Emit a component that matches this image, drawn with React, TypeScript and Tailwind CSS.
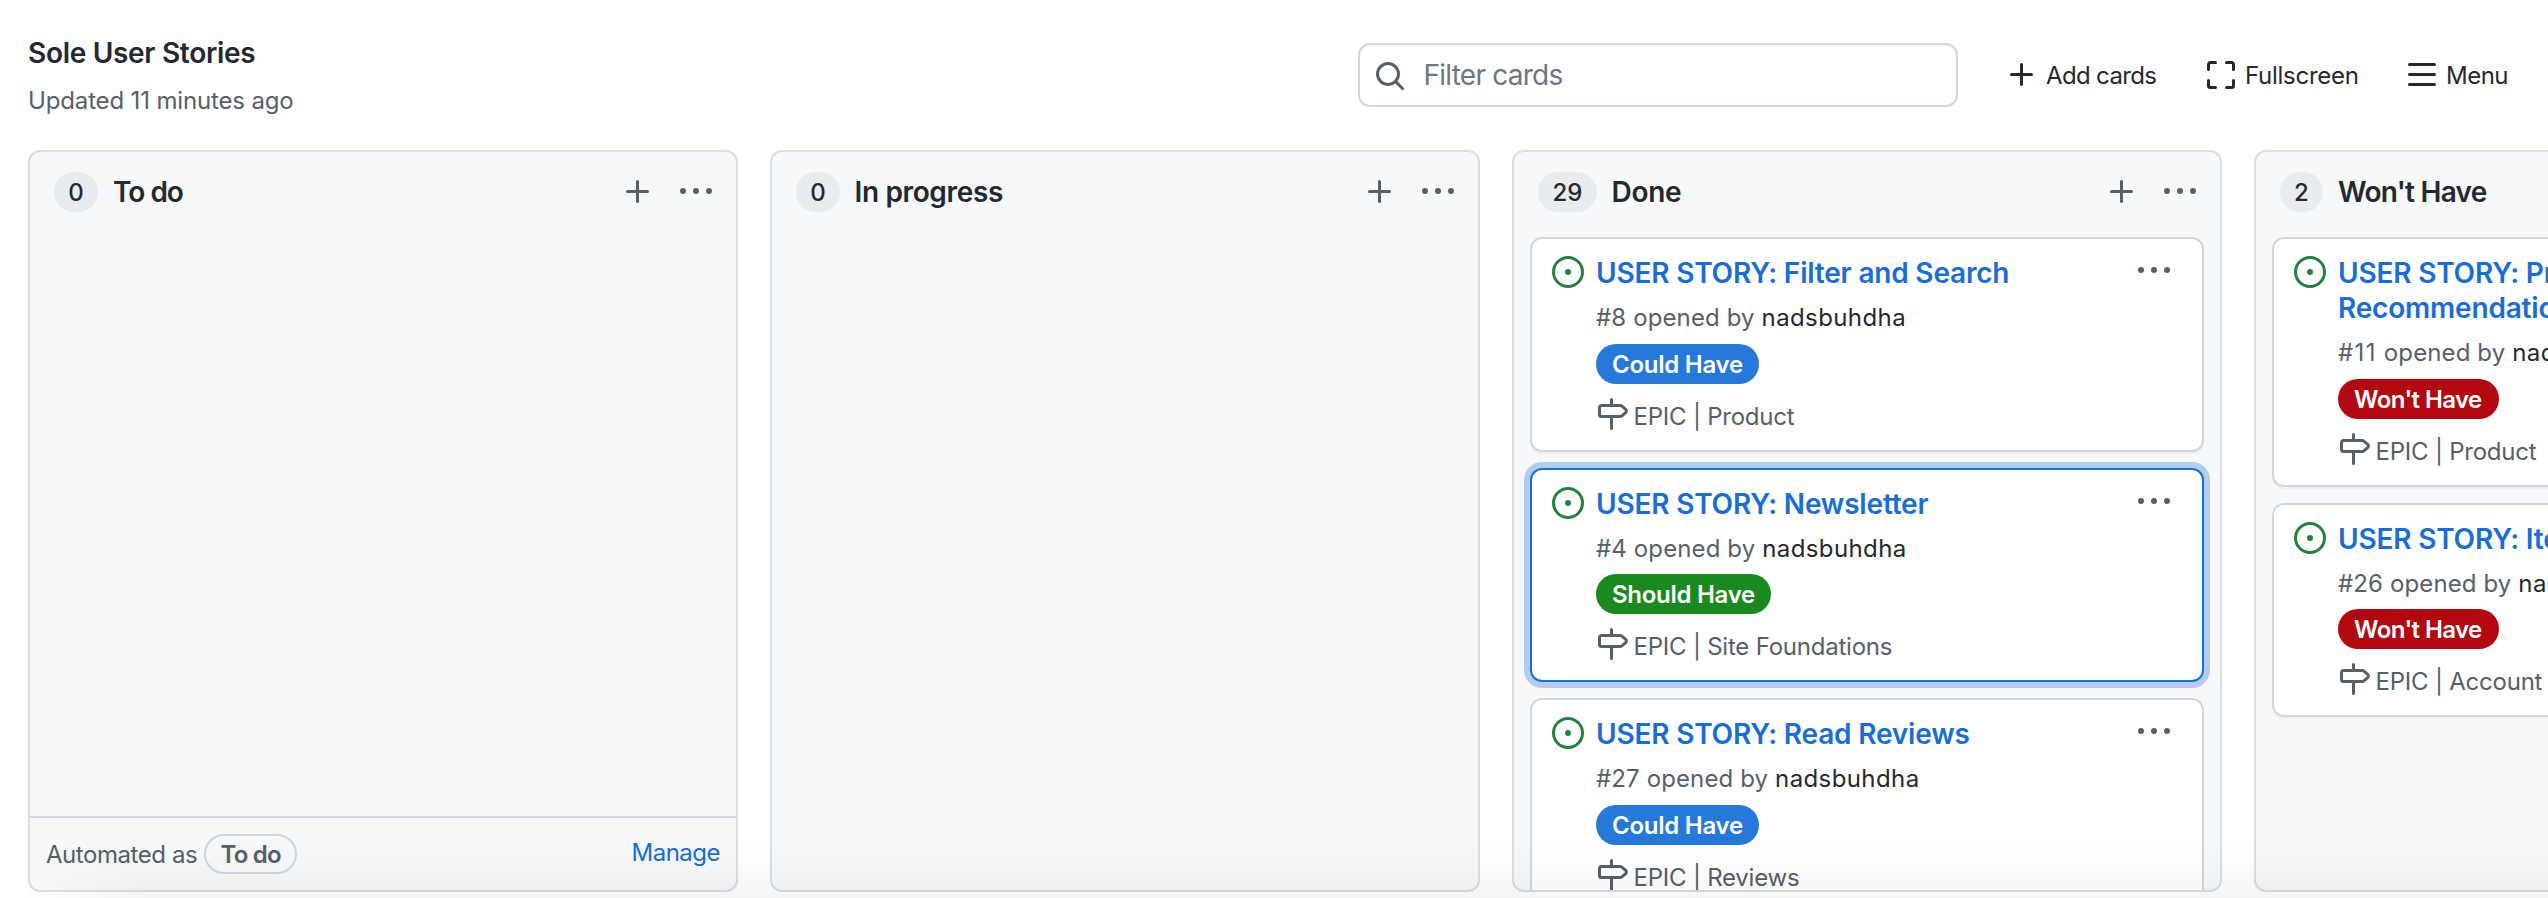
import type { ReactNode } from "react";

function Icon({ d, className = "" }: { d: string; className?: string }) {
  return (
    <svg viewBox="0 0 16 16" className={`block h-8 w-8 shrink-0 fill-current ${className}`}>
      <path fillRule="evenodd" d={d} />
    </svg>
  );
}

const PLUS =
  "M7.75 2a.75.75 0 01.75.75V7h4.25a.75.75 0 110 1.5H8.5v4.25a.75.75 0 11-1.5 0V8.5H2.75a.75.75 0 010-1.5H7V2.75A.75.75 0 017.75 2z";
const KEBAB =
  "M8 9a1.5 1.5 0 100-3 1.5 1.5 0 000 3zM1.5 9a1.5 1.5 0 100-3 1.5 1.5 0 000 3zm13 0a1.5 1.5 0 100-3 1.5 1.5 0 000 3z";
const ISSUE =
  "M8 9.5a1.5 1.5 0 100-3 1.5 1.5 0 000 3zM8 0a8 8 0 100 16A8 8 0 008 0zM1.5 8a6.5 6.5 0 1113 0 6.5 6.5 0 01-13 0z";
const SEARCH =
  "M11.5 7a4.499 4.499 0 11-8.998 0A4.499 4.499 0 0111.5 7zm-.82 4.74a6 6 0 111.06-1.06l3.04 3.04a.75.75 0 11-1.06 1.06l-3.04-3.04z";
const FULL =
  "M2.75 2.5a.25.25 0 00-.25.25v2.5a.75.75 0 01-1.5 0v-2.5C1 1.784 1.784 1 2.75 1h2.5a.75.75 0 010 1.5h-2.5zM10 1.75a.75.75 0 01.75-.75h2.5c.966 0 1.75.784 1.75 1.75v2.5a.75.75 0 01-1.5 0v-2.5a.25.25 0 00-.25-.25h-2.5a.75.75 0 01-.75-.75zM1.75 10a.75.75 0 01.75.75v2.5c0 .138.112.25.25.25h2.5a.75.75 0 010 1.5h-2.5A1.75 1.75 0 011 13.25v-2.5a.75.75 0 01.75-.75zm12.5 0a.75.75 0 01.75.75v2.5A1.75 1.75 0 0113.25 15h-2.5a.75.75 0 010-1.5h2.5a.25.25 0 00.25-.25v-2.5a.75.75 0 01.75-.75z";
const BARS =
  "M1 2.75A.75.75 0 011.75 2h12.5a.75.75 0 110 1.5H1.75A.75.75 0 011 2.75zm0 5A.75.75 0 011.75 7h12.5a.75.75 0 110 1.5H1.75A.75.75 0 011 7.75zM1.75 12a.75.75 0 100 1.5h12.5a.75.75 0 100-1.5H1.75z";
const MILESTONE =
  "M7.75 0a.75.75 0 01.75.75V3h3.634c.414 0 .814.147 1.13.414l2.07 1.75a1.75 1.75 0 010 2.672l-2.07 1.75a1.75 1.75 0 01-1.13.414H8.5v5.25a.75.75 0 11-1.5 0V10H2.75A1.75 1.75 0 011 8.25v-3.5C1 3.784 1.784 3 2.75 3H7V.75A.75.75 0 017.75 0zm0 8.5h4.384a.25.25 0 00.161-.06l2.07-1.75a.25.25 0 000-.38l-2.07-1.75a.25.25 0 00-.161-.06H2.75a.25.25 0 00-.25.25v3.5c0 .138.112.25.25.25h5z";

const COULD = { text: "Could Have", style: "bg-[#2579da] w-[163px] tracking-[-0.25px]" };
const SHOULD = { text: "Should Have", style: "bg-[#1a8a20] w-[175px] tracking-[-0.28px]" };
const WONT = { text: "Won't Have", style: "bg-[#b30810] w-[161px] tracking-[-0.61px]" };

type CardProps = {
  title: string[];
  number: number;
  numberStyle?: string;
  label: { text: string; style: string };
  milestone: string;
  selected?: boolean;
};

function Card({ title, number, numberStyle = "", label, milestone, selected = false }: CardProps) {
  return (
    <article
      className={`mb-4 flex w-[674px] shrink-0 rounded-xl border-2 bg-white pt-4 pb-[19.75px] pl-5 ${
        selected
          ? "border-[#196dd8] shadow-[0_0_0_6px_#b3cdf1]"
          : "border-[#d0d7de] shadow-[0_2px_0_rgba(31,35,40,0.04)]"
      }`}
    >
      <Icon d={ISSUE} className="mt-px text-[#22813c]" />
      <div className="ml-3 w-[542px] pt-px">
        <h3 className="text-[28px] leading-[35px] font-semibold tracking-[-0.19px] text-[#196dd8]">
          {title.map((line) => (
            <span key={line} className="block whitespace-nowrap">
              {line}
            </span>
          ))}
        </h3>
        <p className="mt-[9px] h-9 text-2xl leading-9 tracking-[0.12px] whitespace-nowrap text-[#57606a]">
          <span className={numberStyle}>#{number}</span> opened by{" "}
          <span className="tracking-[0.4px] text-[#24292f]">nadsbuhdha</span>
        </p>
        <div
          className={`mt-[7.75px] h-10 rounded-full pl-4 text-2xl leading-[42px] font-semibold whitespace-nowrap text-white ${label.style}`}
        >
          {label.text}
        </div>
        <div className="mt-[14px] flex h-8 text-[#57606a]">
          <Icon d={MILESTONE} />
          <span className="ml-[5.5px] pt-[3px] text-2xl leading-8 tracking-[-0.22px] whitespace-nowrap">
            EPIC | {milestone}
          </span>
        </div>
      </div>
      <Icon d={KEBAB} className="text-[#57606a]" />
    </article>
  );
}

type ColumnProps = {
  count: number;
  countStyle: string;
  title: string;
  titleStyle: string;
  children?: ReactNode;
};

function Column({ count, countStyle, title, titleStyle, children }: ColumnProps) {
  return (
    <section className="flex h-[742px] w-[710px] shrink-0 flex-col overflow-hidden rounded-xl border-2 border-[#d8dee4] bg-[#f6f8fa]">
      <header className="flex h-[85px] shrink-0 items-center pr-6 pb-[5px] pl-6">
        <span
          className={`h-10 rounded-full bg-[#e8ebf0] text-center text-2xl leading-[41px] font-medium text-[#24292f] ${countStyle}`}
        >
          {count}
        </span>
        <h2 className={`text-[28px] leading-10 font-semibold text-[#24292f] ${titleStyle}`}>{title}</h2>
        <div className="ml-auto flex gap-[26px] text-[#57606a]">
          <Icon d={PLUS} />
          <Icon d={KEBAB} />
        </div>
      </header>
      {children}
    </section>
  );
}

export default function App() {
  return (
    <div className="relative h-[898px] w-[2548px] overflow-hidden bg-white font-['Inter',sans-serif]">
      <div className="flex h-[150px] pl-7">
        <div className="w-[1330px] pt-[33px]">
          <h1 className="h-[41px] text-[28px] leading-[41px] font-semibold tracking-[-0.3px] text-[#24292f]">
            Sole User Stories
          </h1>
          <p className="mt-[9px] text-2xl leading-9 tracking-[-0.15px] text-[#57606a]">Updated 11 minutes ago</p>
        </div>
        <div className="mt-[43px] flex h-16 w-[600px] items-center rounded-xl border-2 border-[#d0d7de] bg-white pl-[14px] shadow-[inset_0_2px_0_rgba(208,215,222,0.2)]">
          <Icon d={SEARCH} className="mt-[2px] text-[#57606a]" />
          <span className="ml-[17.5px] text-[28px] leading-9 tracking-[-0.76px] text-[#6e7781]">Filter cards</span>
        </div>
        <nav className="mt-[43px] ml-12 flex h-16 items-center text-2xl text-[#24292f]">
          <button className="flex w-[199px] items-center gap-2 tracking-[-0.65px]">
            <Icon d={PLUS} />
            <span className="pt-[2px]">Add cards</span>
          </button>
          <button className="flex w-[201px] items-center gap-2 tracking-[-0.27px]">
            <Icon d={FULL} />
            <span className="pt-[2px]">Fullscreen</span>
          </button>
          <button className="flex items-center gap-2 tracking-[-0.5px]">
            <Icon d={BARS} />
            <span className="pt-[2px]">Menu</span>
          </button>
        </nav>
      </div>

      <main className="flex gap-8 pl-7">
        <Column count={0} countStyle="w-11" title="To do" titleStyle="ml-[15px] tracking-[-1px]">
          <footer className="mt-auto flex h-[74px] items-center border-t-2 border-[#d0d7de] pr-4 pl-4 text-2xl">
            <span className="pt-[2px] tracking-[-0.44px] text-[#57606a]">Automated as</span>
            <span className="ml-[7px] flex h-10 w-[93px] items-center justify-center rounded-full border-2 border-[#d0d7de] pt-px font-semibold tracking-[-0.8px] text-[#57606a]">
              To do
            </span>
            <a className="ml-auto pb-[2px] tracking-[-0.5px] text-[#196dd8]">Manage</a>
          </footer>
        </Column>
        <Column count={0} countStyle="w-11" title="In progress" titleStyle="ml-[14.5px] tracking-[-0.35px]" />
        <Column count={29} countStyle="w-[59px]" title="Done" titleStyle="ml-[14.5px] tracking-[-0.3px]">
          <div className="flex flex-col pl-4">
            <Card title={["USER STORY: Filter and Search"]} number={8} label={COULD} milestone="Product" />
            <Card title={["USER STORY: Newsletter"]} number={4} label={SHOULD} milestone="Site Foundations" selected />
            <Card title={["USER STORY: Read Reviews"]} number={27} label={COULD} milestone="Reviews" />
          </div>
        </Column>
        <Column count={2} countStyle="w-[43px]" title="Won't Have" titleStyle="ml-[15px] tracking-[-0.74px]">
          <div className="flex flex-col pl-4">
            <Card
              title={["USER STORY: Product", "Recommendations"]}
              number={11}
              numberStyle="tracking-[1.4px]"
              label={WONT}
              milestone="Product"
            />
            <Card title={["USER STORY: Item Wishlist"]} number={26} label={WONT} milestone="Account" />
          </div>
        </Column>
      </main>

      <div className="pointer-events-none absolute right-0 bottom-0 left-0 h-[68px] bg-linear-to-b from-transparent via-black/[0.01] to-black/[0.04] [mask-image:linear-gradient(to_right,transparent_20px,black_150px)]" />
    </div>
  );
}
